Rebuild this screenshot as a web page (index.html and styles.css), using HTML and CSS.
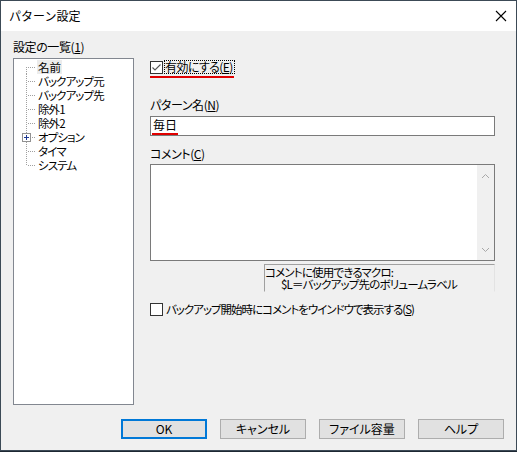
FILE: index.html
```html
<!DOCTYPE html>
<html lang="ja">
<head>
<meta charset="utf-8">
<title>パターン設定</title>
<link rel="stylesheet" href="styles.css">
</head>
<body>
<div class="window">
  <div class="titlebar">
    <span class="title">パターン設定</span>
    <svg class="close" width="12" height="12" viewBox="0 0 12 12"><path d="M1 1 L11 11 M11 1 L1 11" stroke="#000" stroke-width="1.1" fill="none"/></svg>
  </div>
  <div class="content">
    <div class="main">
      <div class="left">
        <div class="label">設定の一覧(<u>1</u>)</div>
        <div class="tree">
          <div class="item first"><span class="gut"></span><span class="txt sel">名前</span></div>
          <div class="item"><span class="gut"></span><span class="txt">バックアップ元</span></div>
          <div class="item"><span class="gut"></span><span class="txt">バックアップ先</span></div>
          <div class="item"><span class="gut"></span><span class="txt">除外1</span></div>
          <div class="item"><span class="gut"></span><span class="txt">除外2</span></div>
          <div class="item"><span class="gut plus"><svg width="9" height="9" viewBox="0 0 9 9"><rect x="0.5" y="0.5" width="8" height="8" fill="#fff" stroke="#919191"/><path d="M2 4.5 H7 M4.5 2 V7" stroke="#1f3a93" stroke-width="1"/></svg></span><span class="txt">オプション</span></div>
          <div class="item"><span class="gut"></span><span class="txt">タイマ</span></div>
          <div class="item last"><span class="gut"></span><span class="txt">システム</span></div>
        </div>
      </div>
      <div class="right">
        <div class="checkrow enable">
          <span class="box"><svg width="13" height="13" viewBox="0 0 13 13"><rect x="0.5" y="0.5" width="12" height="12" fill="#fff" stroke="#333"/><path d="M2.5 6.5 L5 9 L10.5 3.5" stroke="#555" stroke-width="1.1" fill="none"/></svg></span>
          <span class="focus">有効にする(<u>E</u>)</span>
        </div>
        <div class="redline r1"></div>
        <div class="label l2">パターン名(<u>N</u>)</div>
        <div class="input"><span class="val">毎日</span></div>
        <div class="label l3">コメント(<u>C</u>)</div>
        <div class="textarea">
          <div class="ta-body"></div>
          <div class="scroll">
            <svg width="9" height="6" viewBox="0 0 9 6"><path d="M1 5 L4.5 1.5 L8 5" stroke="#a8a8a8" stroke-width="1" fill="none"/></svg>
            <svg width="9" height="6" viewBox="0 0 9 6"><path d="M1 1 L4.5 4.5 L8 1" stroke="#a8a8a8" stroke-width="1" fill="none"/></svg>
          </div>
        </div>
        <div class="macro">
          <div>コメントに使用できるマクロ:</div>
          <div class="indent">$L＝バックアップ先のボリュームラベル</div>
        </div>
        <div class="checkrow show">
          <span class="box"><svg width="13" height="13" viewBox="0 0 13 13"><rect x="0.5" y="0.5" width="12" height="12" fill="#fff" stroke="#333"/></svg></span>
          <span class="ctext">バックアップ開始時にコメントをウインドウで表示する(<u>S</u>)</span>
        </div>
      </div>
    </div>
    <div class="footer">
      <button class="btn default">OK</button>
      <button class="btn">キャンセル</button>
      <button class="btn">ファイル容量</button>
      <button class="btn">ヘルプ</button>
    </div>
  </div>
</div>
</body>
</html>
```
FILE: styles.css
```css
* { box-sizing: border-box; }
html, body { margin: 0; padding: 0; }
body {
  width: 517px;
  height: 452px;
  background: #1d2833;
  font-family: "Noto Sans CJK JP", "Noto Sans", sans-serif;
  font-size: 12px;
  line-height: 14px;
  color: #000;
  overflow: hidden;
  font-feature-settings: "palt" 1;
}
u { text-decoration: underline; text-underline-offset: 1px; }
.window {
  width: 517px;
  height: 451px;
  border: 1px solid #3c4a56;
  display: flex;
  flex-direction: column;
  background: #f0f0f0;
}
.titlebar {
  height: 30px;
  background: #fff;
  display: flex;
  align-items: center;
  justify-content: space-between;
  padding: 0 9px 0 8px;
}
.title { font-size: 12px; font-feature-settings: normal; }
.close { display: block; margin-top: -1px; }
.content {
  flex: 1;
  display: flex;
  flex-direction: column;
}
.main { display: flex; }
.left {
  padding: 9px 0 0 12px;
  width: 149px;
}
.label { height: 14px; white-space: nowrap; letter-spacing: -0.4px; }
.tree {
  margin-top: 4px;
  width: 121px;
  height: 347px;
  background: #fff;
  border: 1px solid #828790;
  padding-top: 1px;
}
.item {
  display: flex;
  height: 14px;
  align-items: center;
}
.gut {
  width: 23px;
  height: 14px;
  flex: none;
  background-image:
    repeating-linear-gradient(to bottom, #a0a0a0 0 1px, transparent 1px 2px),
    repeating-linear-gradient(to right, #a0a0a0 0 1px, transparent 1px 2px);
  background-repeat: no-repeat;
  background-position: 12px 0, 14px 7px;
  background-size: 1px 14px, 8px 1px;
  display: flex;
  align-items: center;
}
.item.first .gut { background-position: 12px 7px, 14px 7px; background-size: 1px 7px, 8px 1px; }
.item.last .gut { background-size: 1px 8px, 8px 1px; }
.gut.plus svg { margin-left: 8px; }
.gut.plus { background-position: 12px 0, 18px 7px; background-size: 1px 14px, 4px 1px; }
.txt { padding: 0 1px; white-space: nowrap; height: 14px; font-size: 11.5px; letter-spacing: -0.9px; }
.txt.sel { background: #ececec; letter-spacing: 0; }
.right {
  padding-top: 29px;
  width: 346px;
  display: flex;
  flex-direction: column;
}
.checkrow { display: flex; align-items: center; height: 14px; }
.box { width: 13px; height: 13px; display: block; flex: none; }
.box svg { display: block; }
.focus {
  margin-left: 1px;
  border: 1px dotted #000;
  height: 14px;
  line-height: 12px;
  white-space: nowrap;
  padding-right: 1px;
  letter-spacing: -0.6px;
}
.redline {
  height: 2px;
  background: #e00000;
}
.r1 { width: 84px; margin-top: 2px; }
.l2 { margin-top: 20px; }
.input {
  margin-top: 4px;
  height: 20px;
  width: 345px;
  background: #fff;
  border: 1px solid #7a7a7a;
  padding-left: 1px;
  display: flex;
  align-items: center;
}
.val {
  display: inline-block;
  height: 14px;
  border-bottom: 2px solid #e00000;
  line-height: 12px;
  padding: 0 1px;
  box-sizing: content-box;
  margin-top: 1px;
}
.l3 { margin-top: 11px; }
.textarea {
  margin-top: 3px;
  height: 97px;
  width: 345px;
  border: 1px solid #7a7a7a;
  background: #fff;
  display: flex;
}
.ta-body { flex: 1; }
.scroll {
  width: 17px;
  background: #f0f0f0;
  display: flex;
  flex-direction: column;
  justify-content: space-between;
  align-items: center;
  padding: 8px 0 7px;
}
.scroll svg { display: block; }
.macro {
  margin-top: 3px;
  margin-left: 114px;
  width: 231px;
  height: 28px;
  border-style: solid;
  border-width: 1px;
  border-color: #a0a0a0 #e3e3e3 #f0f0f0 #a0a0a0;
  font-size: 11.5px;
  line-height: 12px;
  padding-top: 1px;
  white-space: nowrap;
  letter-spacing: -0.8px;
  overflow: hidden;
}
.indent { padding-left: 16px; }
.show { margin-top: 10px; }
.ctext { margin-left: 3px; white-space: nowrap; font-size: 11.5px; letter-spacing: -1px; }
.footer {
  display: flex;
  justify-content: flex-end;
  gap: 13px;
  margin-top: 14px;
  padding-right: 12px;
}
.btn {
  width: 86px;
  height: 20px;
  background: #e1e1e1;
  border: 1px solid #adadad;
  font-family: "Noto Sans CJK JP", "Noto Sans", sans-serif;
  font-size: 12px;
  line-height: 14px;
  padding: 0;
  color: #000;
  font-feature-settings: "palt" 1;
}
.btn.default { border: 2px solid #0078d7; }
```
